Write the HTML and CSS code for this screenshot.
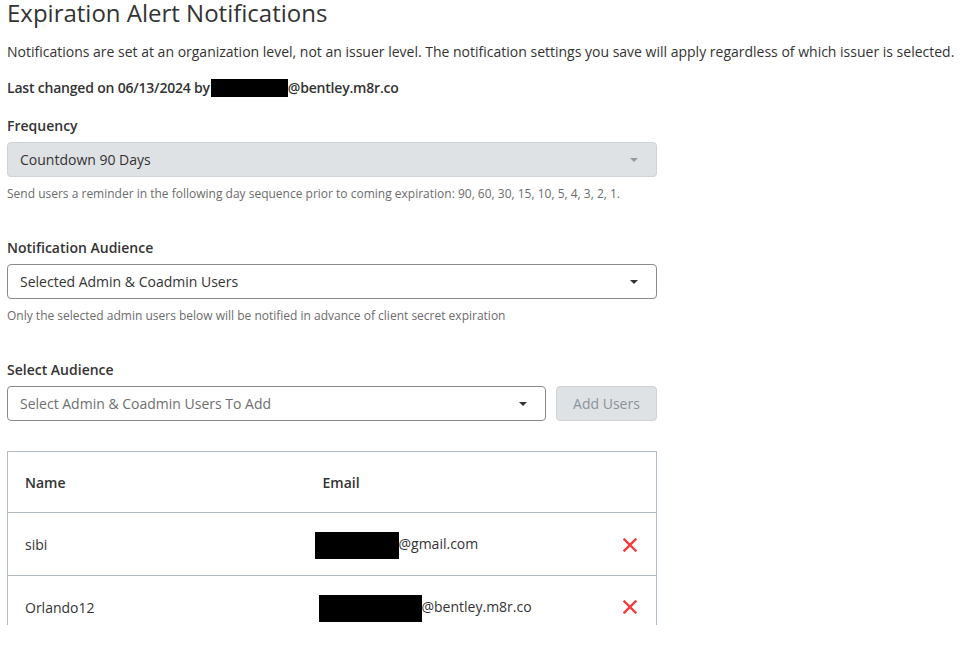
FILE: index.html
```html
<!DOCTYPE html>
<html lang="en">
<head>
    <meta charset="UTF-8">
    <meta name="viewport" content="width=device-width, initial-scale=1.0">
    <title>Expiration Alert Notifications</title>
    <link rel="stylesheet" href="styles.css">
</head>
<body>
    <div class="page">
        <h1>Expiration Alert Notifications</h1>
        <p class="intro">Notifications are set at an organization level, not an issuer level. The notification settings you save will apply regardless of which issuer is selected.</p>
        <p class="last-changed">Last changed on 06/13/2024 by<span class="redact redact-user"></span>@bentley.m8r.co</p>

        <div class="form-group">
            <label>Frequency</label>
            <div class="select disabled">
                <span>Countdown 90 Days</span>
                <span class="caret"></span>
            </div>
            <div class="help">Send users a reminder in the following day sequence prior to coming expiration: 90, 60, 30, 15, 10, 5, 4, 3, 2, 1.</div>
        </div>

        <div class="form-group">
            <label>Notification Audience</label>
            <div class="select">
                <span>Selected Admin &amp; Coadmin Users</span>
                <span class="caret"></span>
            </div>
            <div class="help">Only the selected admin users below will be notified in advance of client secret expiration</div>
        </div>

        <div class="form-group">
            <label>Select Audience</label>
            <div class="add-row">
                <div class="select placeholder">
                    <span>Select Admin &amp; Coadmin Users To Add</span>
                    <span class="caret"></span>
                </div>
                <button class="add-btn" disabled>Add Users</button>
            </div>
        </div>

        <div class="table-wrap">
            <table class="users">
                <thead>
                    <tr>
                        <th class="col-name">Name</th>
                        <th class="col-email">Email</th>
                        <th class="col-action"></th>
                    </tr>
                </thead>
                <tbody>
                    <tr>
                        <td>sibi</td>
                        <td><span class="redact redact-a"></span>@gmail.com</td>
                        <td class="col-action">
                            <svg class="remove" width="14" height="14" viewBox="0 0 14 14"><path d="M1.5 1.5L12.5 12.5M12.5 1.5L1.5 12.5" stroke="#f53b3b" stroke-width="2.4" stroke-linecap="square"/></svg>
                        </td>
                    </tr>
                    <tr>
                        <td>Orlando12</td>
                        <td><span class="redact redact-b"></span>@bentley.m8r.co</td>
                        <td class="col-action">
                            <svg class="remove" width="14" height="14" viewBox="0 0 14 14"><path d="M1.5 1.5L12.5 12.5M12.5 1.5L1.5 12.5" stroke="#f53b3b" stroke-width="2.4" stroke-linecap="square"/></svg>
                        </td>
                    </tr>
                </tbody>
            </table>
        </div>
    </div>
</body>
</html>
```

FILE: styles.css
```css
* {
    margin: 0;
    padding: 0;
    box-sizing: border-box;
}

body {
    font-family: 'Open Sans', 'Noto Sans', sans-serif;
    font-size: 14px;
    line-height: 21px;
    color: #333;
    background: #fff;
}

.page {
    padding: 0 7px;
}

h1 {
    font-size: 24px;
    font-weight: 400;
    line-height: 26px;
    color: #333;
    margin-bottom: 15px;
}

.intro {
    margin-bottom: 15px;
}

.last-changed {
    font-weight: 600;
    letter-spacing: -0.2px;
    margin-bottom: 17px;
}

.redact {
    display: inline-block;
    background: #000;
    vertical-align: middle;
}

.redact-user {
    width: 77px;
    height: 18px;
    margin: -2px 0 0 1px;
}

.redact-a {
    width: 84px;
    height: 27px;
    margin: -3px 0 -3px -8px;
}

.redact-b {
    width: 103px;
    height: 27px;
    margin: -3px 0 -3px -4px;
}

.form-group {
    width: 650px;
    margin-bottom: 34px;
}

.form-group label {
    display: block;
    font-weight: 600;
    margin-bottom: 6px;
}

.select {
    height: 35px;
    display: flex;
    align-items: center;
    justify-content: space-between;
    padding: 0 18px 0 12px;
    border: 1px solid #8a8a8a;
    border-radius: 4px;
    background: #fff;
    color: #333;
}

.select.disabled {
    background: #dfe2e5;
    border-color: #ced3d8;
}

.select.placeholder {
    color: #6f6f6f;
    flex: 1;
}

.caret {
    width: 0;
    height: 0;
    border-left: 4px solid transparent;
    border-right: 4px solid transparent;
    border-top: 4px solid #333;
}

.select.disabled .caret {
    border-top-color: #999;
}

.help {
    margin-top: 8px;
    font-size: 12px;
    line-height: 18px;
    color: #6c6c6c;
}

.add-row {
    display: flex;
    gap: 10px;
}

.add-btn {
    width: 101px;
    height: 35px;
    font-family: inherit;
    font-size: 14px;
    color: #8c939a;
    background: #dfe2e5;
    border: 1px solid #ced3d8;
    border-radius: 4px;
}

.table-wrap {
    width: 650px;
    height: 174px;
    margin-top: -4px;
    overflow: hidden;
}

.users {
    width: 100%;
    border-collapse: collapse;
    border: 1px solid #b3bcc4;
}

.users th,
.users td {
    text-align: left;
    padding: 20px 17px 19px;
    border-bottom: 1px solid #b3bcc4;
}

.users th {
    font-weight: 600;
}

.col-name {
    width: 298px;
}

.users .col-action {
    width: 56px;
    text-align: right;
    padding-right: 19px;
}

.remove {
    display: inline-block;
    vertical-align: middle;
    margin-top: -3px;
}
```
